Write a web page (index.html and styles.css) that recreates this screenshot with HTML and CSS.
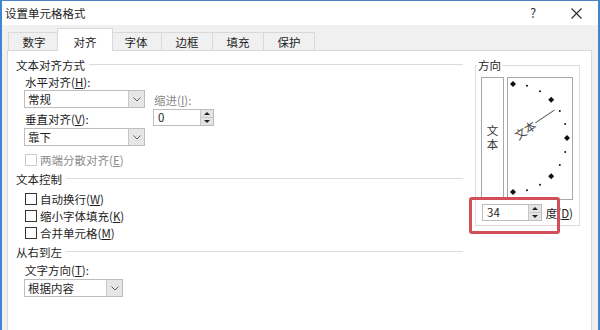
FILE: index.html
```html
<!DOCTYPE html>
<html lang="zh-CN">
<head>
<meta charset="utf-8">
<title>设置单元格格式</title>
<link rel="stylesheet" href="styles.css">
</head>
<body>
<div class="window">
  <div class="titlebar">
    <span class="title">设置单元格格式</span>
    <span class="help">?</span>
    <span class="close"><svg width="11" height="11" viewBox="0 0 11 11"><path d="M0.5 0.5L10.5 10.5M10.5 0.5L0.5 10.5" stroke="#2b2b2b" stroke-width="1.1" fill="none"/></svg></span>
  </div>
  <div class="tabs">
    <div class="tab">数字</div>
    <div class="tab active">对齐</div>
    <div class="tab">字体</div>
    <div class="tab">边框</div>
    <div class="tab">填充</div>
    <div class="tab">保护</div>
  </div>
  <div class="panel">
    <div class="left">
      <div class="head">文本对齐方式</div>
      <div class="align">
        <div class="align-main">
          <div class="lbl">水平对齐(<u>H</u>):</div>
          <div class="select"><span class="val">常规</span><span class="btn"><svg width="8" height="5" viewBox="0 0 8 5"><path d="M0.5 0.5L4 4L7.5 0.5" stroke="#606060" stroke-width="1" fill="none"/></svg></span></div>
          <div class="lbl l-v">垂直对齐(<u>V</u>):</div>
          <div class="select s-v"><span class="val">靠下</span><span class="btn"><svg width="8" height="5" viewBox="0 0 8 5"><path d="M0.5 0.5L4 4L7.5 0.5" stroke="#606060" stroke-width="1" fill="none"/></svg></span></div>
        </div>
        <div class="indent">
          <div class="lbl dis">缩进(<u>I</u>):</div>
          <div class="spin sp-indent"><span class="val">0</span><span class="arrows"><span><i class="up"></i></span><span><i class="down"></i></span></span></div>
        </div>
      </div>
      <div class="check disabled c-dist"><span class="box"></span>两端分散对齐(<u>E</u>)</div>
      <div class="head h2">文本控制</div>
      <div class="checks">
        <div class="check"><span class="box"></span>自动换行(<u>W</u>)</div>
        <div class="check"><span class="box"></span>缩小字体填充(<u>K</u>)</div>
        <div class="check"><span class="box"></span>合并单元格(<u>M</u>)</div>
      </div>
      <div class="head h3">从右到左</div>
      <div class="lbl l-dir">文字方向(<u>T</u>):</div>
      <div class="select s-dir"><span class="val">根据内容</span><span class="btn"><svg width="8" height="5" viewBox="0 0 8 5"><path d="M0.5 0.5L4 4L7.5 0.5" stroke="#606060" stroke-width="1" fill="none"/></svg></span></div>
    </div>
    <fieldset class="orient">
      <legend>方向</legend>
      <div class="orient-boxes">
        <div class="vbox"><span class="vtext">文本</span></div>
        <div class="dial">
          <svg width="64" height="121" viewBox="0 0 64 121">
            <g fill="#111">
              <path d="M5 3L8 6L5 9L2 6Z"/>
              <path d="M43.2 18.8L46.2 21.8L43.2 24.8L40.2 21.8Z"/>
              <path d="M59 57L62 60L59 63L56 60Z"/>
              <path d="M43.2 95.2L46.2 98.2L43.2 101.2L40.2 98.2Z"/>
              <path d="M5 111L8 114L5 117L2 114Z"/>
              <circle cx="19" cy="7.8" r="1"/>
              <circle cx="32" cy="13.2" r="1"/>
              <circle cx="51.8" cy="33" r="1"/>
              <circle cx="57.2" cy="46" r="1"/>
              <circle cx="57.2" cy="74" r="1"/>
              <circle cx="51.8" cy="87" r="1"/>
              <circle cx="32" cy="106.8" r="1"/>
              <circle cx="19" cy="112.2" r="1"/>
            </g>
            <g transform="translate(5 60) rotate(-34)">
              <text x="3" y="0" dominant-baseline="central" class="dial-text">文本</text>
              <line x1="27" y1="0" x2="50" y2="0" stroke="#333" stroke-width="0.8"/>
            </g>
          </svg>
        </div>
      </div>
      <div class="deg-row">
        <div class="spin sp-deg"><span class="val">34</span><span class="arrows"><span><i class="up"></i></span><span><i class="down"></i></span></span></div>
        <span class="deg-lbl">度(<u>D</u>)</span>
      </div>
    </fieldset>
  </div>
  <div class="mark"></div>
</div>
</body>
</html>
```

FILE: styles.css
```css
* { box-sizing: border-box; }
html, body { margin: 0; padding: 0; }
body {
  font-family: "Noto Sans CJK SC", "Microsoft YaHei", sans-serif;
  font-size: 11.5px;
  color: #1e1e1e;
  background: #fff;
}
u { text-decoration-thickness: 1px; text-underline-offset: 1px; }

.window {
  position: relative;
  width: 600px;
  height: 330px;
  background: #f0f0f0;
  border-top: 1px solid #4a84c4;
  border-left: 2px solid #3a86cf;
  border-right: 2px solid #3a86cf;
  display: flex;
  flex-direction: column;
  overflow: hidden;
}

.titlebar {
  flex: none;
  height: 24px;
  background: #fff;
  display: flex;
  align-items: center;
  padding-left: 3px;
}
.title { flex: 1; line-height: 16px; }
.help {
  width: 10px;
  text-align: center;
  font-size: 13px;
  line-height: 16px;
  color: #333;
  margin-right: 33px;
}
.close { width: 11px; height: 11px; margin-right: 16px; display: flex; }

.tabs {
  flex: none;
  height: 25px;
  padding: 3px 0 0 6px;
  display: flex;
  align-items: flex-end;
}
.tab {
  width: 52px;
  height: 18px;
  margin-right: -1px;
  border: 1px solid #d9d9d9;
  border-bottom: none;
  background: #f0f0f0;
  display: flex;
  align-items: center;
  justify-content: center;
  line-height: 16px;
}
.tab.active {
  position: relative;
  z-index: 1;
  width: 56px;
  height: 23px;
  margin: 0 -3px -1px -2px;
  padding-top: 4px;
  background: #fff;
}

.panel {
  flex: 1;
  margin: 0 6px 0 5px;
  background: #fff;
  border: 1px solid #d9d9d9;
  border-bottom: none;
  display: flex;
  align-items: flex-start;
}

.left {
  width: 463px;
  flex: none;
  padding: 6px 8px 0 8px;
}
.head {
  display: flex;
  align-items: center;
  height: 16px;
  line-height: 16px;
  white-space: nowrap;
}
.head::after {
  content: "";
  flex: 1;
  border-top: 1px solid #dcdcdc;
  margin-left: 4px;
  margin-top: -1px;
}
.h2, .h3 { margin-top: 3px; }

.lbl {
  height: 16px;
  line-height: 16px;
  padding-left: 1px;
  white-space: nowrap;
}
.lbl.dis { color: #8a8a8a; }
.l-v { margin-top: 3px; }
.l-dir { margin: 2px 0 0 8px; }

.align { display: flex; margin: 1px 0 0 8px; }
.align-main { width: 121px; }
.indent { margin-left: 8px; padding-top: 18px; }

.select {
  display: flex;
  height: 18px;
  border: 1px solid #bdbdbd;
  background: #fff;
}
.select .val { flex: 1; padding-left: 3px; line-height: 16px; white-space: nowrap; }
.select .btn {
  width: 16px;
  background: #e6e6e6;
  border-left: 1px solid #c8c8c8;
  display: flex;
  align-items: center;
  justify-content: center;
}
.s-v { margin-top: 1px; }
.s-dir { width: 99px; margin: 1px 0 0 8px; }

.spin {
  display: flex;
  height: 17px;
  border: 1px solid #bdbdbd;
  background: #fff;
}
.spin .val { flex: 1; padding-left: 4px; line-height: 15px; }
.spin .arrows {
  width: 13px;
  display: flex;
  flex-direction: column;
  background: #e4e4e4;
  border-left: 1px solid #c8c8c8;
}
.spin .arrows span {
  flex: 1;
  display: flex;
  align-items: center;
  justify-content: center;
}
.spin .arrows span + span { border-top: 1px solid #c8c8c8; }
.up, .down {
  width: 0;
  height: 0;
  border-left: 3px solid transparent;
  border-right: 3px solid transparent;
}
.up { border-bottom: 3px solid #222; }
.down { border-top: 3px solid #222; }
.sp-indent { width: 61px; margin-top: 1px; }
.sp-deg { width: 61px; }

.check {
  display: flex;
  align-items: center;
  height: 17px;
  padding-left: 9px;
  white-space: nowrap;
}
.check .box {
  width: 12px;
  height: 12px;
  border: 1px solid #333;
  background: #fff;
  margin-right: 3px;
}
.check.disabled { color: #8c8c8c; height: 16px; }
.check.disabled .box { border-color: #cccccc; }
.c-dist { margin-top: 6px; }
.checks { margin-top: 3px; }

.orient {
  flex: none;
  width: 105px;
  min-width: 0;
  margin: 6px 0 0 4px;
  padding: 4px 6px 4px 5px;
  border: 1px solid #dcdcdc;
}
.orient legend {
  padding: 0 1px;
  margin-left: -4px;
  height: 16px;
  line-height: 16px;
}
.orient-boxes { display: flex; gap: 3px; }
.vbox {
  width: 23px;
  height: 123px;
  border: 1px solid #a8a8a8;
  display: flex;
  align-items: center;
  justify-content: center;
}
.vtext {
  writing-mode: vertical-rl;
  text-orientation: upright;
  letter-spacing: 2px;
  line-height: 16px;
  color: #333;
}
.dial {
  width: 66px;
  height: 123px;
  border: 1px solid #a8a8a8;
}
.dial svg { display: block; }
.dial-text { font-size: 11.5px; fill: #444; font-family: "Noto Sans CJK SC", sans-serif; }

.deg-row {
  display: flex;
  align-items: center;
  margin-top: 4px;
  padding-left: 1px;
  white-space: nowrap;
}
.deg-lbl { margin-left: 4px; line-height: 16px; }

.mark {
  position: absolute;
  left: 467px;
  top: 196px;
  width: 91px;
  height: 37px;
  border: 3px solid #d24f5a;
  border-radius: 3px;
}
```
